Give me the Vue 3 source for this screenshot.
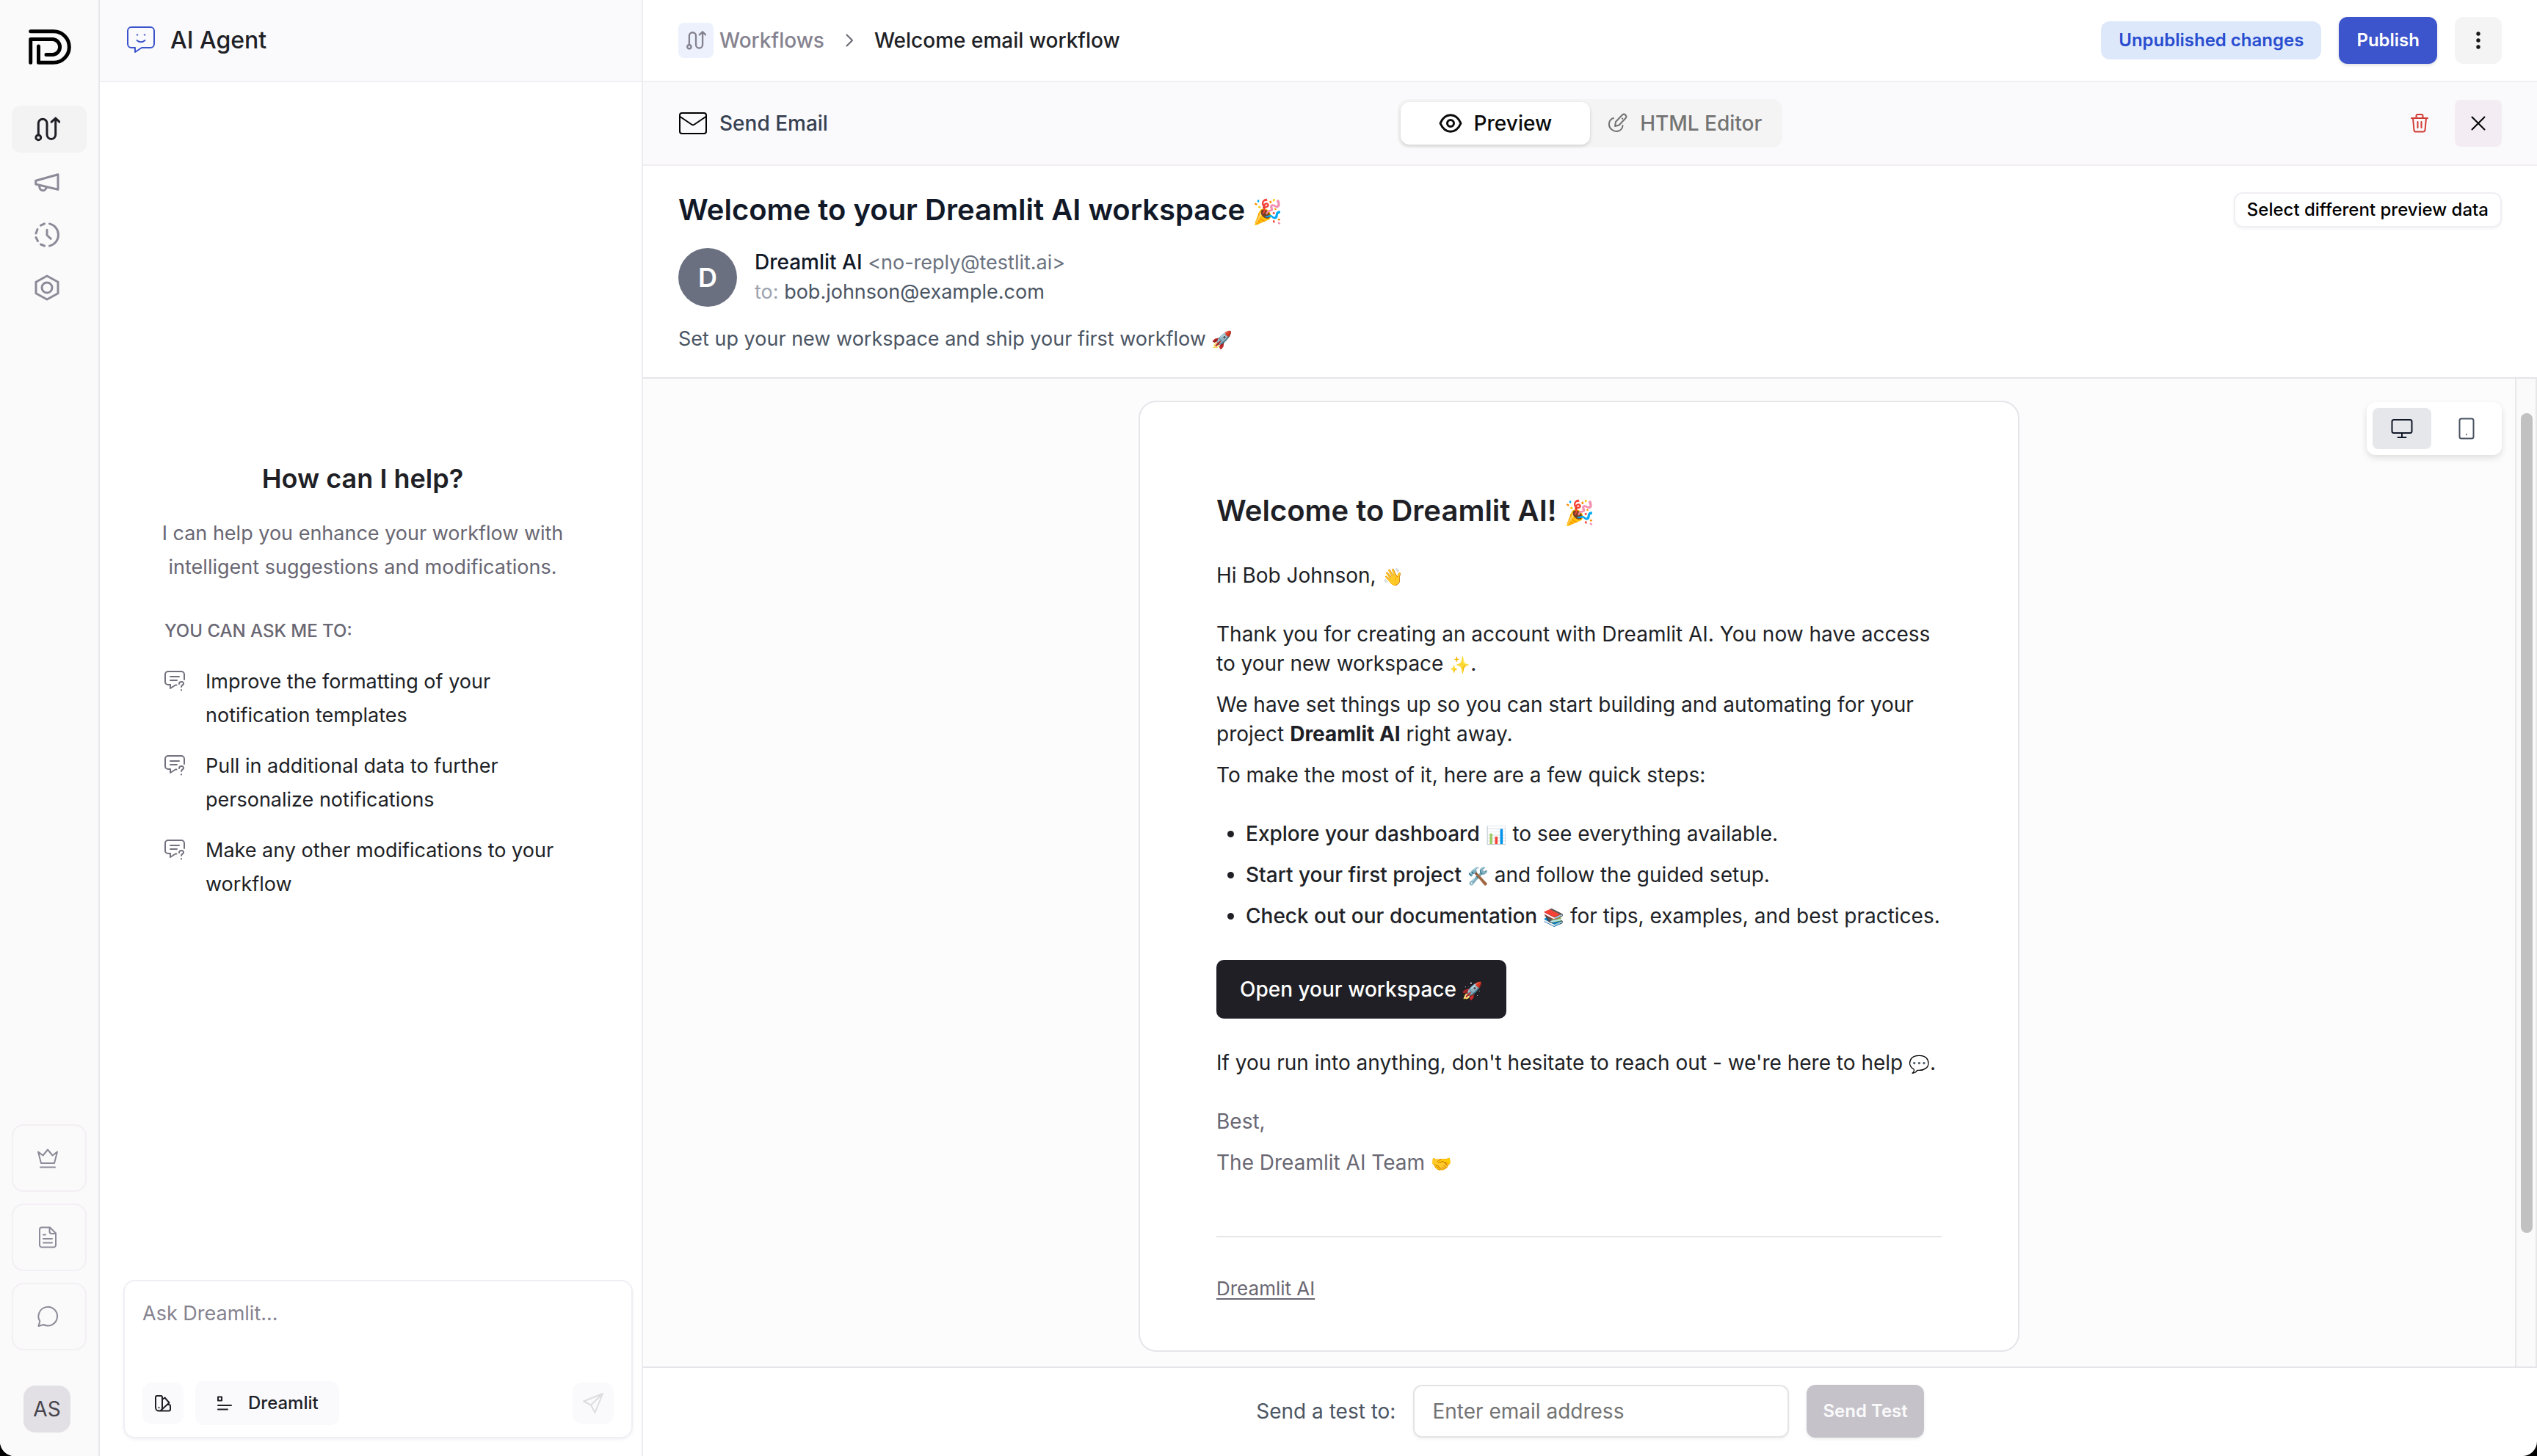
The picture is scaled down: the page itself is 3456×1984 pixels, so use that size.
<script setup>
import { ref } from 'vue'

const email = ref('')
const prompt = ref('')

const suggestions = [
  'Improve the formatting of your notification templates',
  'Pull in additional data to further personalize notifications',
  'Make any other modifications to your workflow',
]

const steps = [
  { title: 'Explore your dashboard', icon: '📊', rest: 'to see everything available.' },
  { title: 'Start your first project', icon: '🛠️', rest: 'and follow the guided setup.' },
  { title: 'Check out our documentation', icon: '📚', rest: 'for tips, examples, and best practices.' },
]
</script>

<template>
  <div class="app">
    <nav class="rail" aria-label="Main">
      <svg class="logo" viewBox="0 0 58 48">
        <path d="M2.7 2.7H34a21.3 21.3 0 0 1 0 42.6H13.5V23" />
        <path d="M2.7 45.3V13.5H33a10.6 10.6 0 0 1 0 21.1H24" />
      </svg>
      <a href="#" class="nav active" aria-label="Workflows">
        <svg class="i36" viewBox="0 0 36 36"><circle cx="6.3" cy="29.4" r="3.4" /><path d="M6.3 26V10a5.85 5.85 0 0 1 11.7 0v15.6a5.85 5.85 0 0 0 11.7 0V3M24.2 8.2 29.7 3l5.3 5.2" /></svg>
      </a>
      <a href="#" class="nav" aria-label="Broadcasts">
        <svg class="i36" viewBox="0 0 36 36"><path d="M2.7 16.3 33 7.7v20.6L2.7 21zM7.6 22.5c0 9 8.5 9 9.7 2.5" /></svg>
      </a>
      <a href="#" class="nav" aria-label="History">
        <svg class="i36" viewBox="0 0 36 36"><path d="M21.5 2.9a15.5 15.5 0 0 1 0 30.2M14.5 2.9l-5 2.3M5 10.5 3 16M3 21.5l2.5 5M9.5 31l5 2M18 11.3v7.2l5.3 4.8" /></svg>
      </a>
      <a href="#" class="nav" aria-label="Settings">
        <svg class="i36" viewBox="0 0 36 36"><path d="m18 2 15 8.2v15.6L18 34 3 25.8V10.2z" /><circle cx="18" cy="18" r="7" /></svg>
      </a>
      <div class="rail-bottom">
        <a href="#" class="tile" aria-label="Upgrade">
          <svg class="i32" viewBox="0 0 32 32"><path d="M3 7.5 7 23h18l4-15.5-6.5 5L16 4.5l-6.500 8zM6 28.5h20" /></svg>
        </a>
        <a href="#" class="tile" aria-label="Documentation">
          <svg class="i32" viewBox="0 0 32 32"><path d="M8 2.5h11l8 8v16a3 3 0 0 1-3 3H8a3 3 0 0 1-3-3v-21a3 3 0 0 1 3-3M18.5 3v5a3 3 0 0 0 3 3H27M10 12.5h3M10 18h12M10 23.5h12" /></svg>
        </a>
        <a href="#" class="tile" aria-label="Feedback">
          <svg class="i32" viewBox="0 0 32 32"><path d="M3.5 29 5.3 22.3A12.8 12.8 0 1 1 10.3 27z" /></svg>
        </a>
        <button class="user" type="button">AS</button>
      </div>
    </nav>

    <aside class="agent">
      <header class="agent-head">
        <svg class="bot" viewBox="0 0 40 40">
          <path d="M7 2h26a5 5 0 0 1 5 5v18a5 5 0 0 1-5 5H21l-9 6v-6H7a5 5 0 0 1-5-5V7a5 5 0 0 1 5-5z" />
          <path d="M14.5 20q5.5 4.5 11 0M14.7 12.5h.6M24.7 12.5h.6" />
        </svg>
        <h2>AI Agent</h2>
      </header>
      <section class="intro">
        <h3>How can I help?</h3>
        <p class="lead">I can help you enhance your workflow with intelligent suggestions and modifications.</p>
        <h4>YOU CAN ASK ME TO:</h4>
        <ul>
          <li v-for="s in suggestions" :key="s">
            <svg class="i28" viewBox="0 0 28 28"><path d="M27 12V5a4 4 0 0 0-4-4H5a4 4 0 0 0-4 4v10a4 4 0 0 0 4 4h3v5l7-4.5h1.5M8 8h12M8 13h9M20 18c0-4.5 7-3.5 6 0-.4 1.5-3 1.5-3 4M23 26v.5" /></svg>
            <span>{{ s }}</span>
          </li>
        </ul>
      </section>
      <form class="chat" @submit.prevent>
        <textarea v-model="prompt" aria-label="Ask Dreamlit" placeholder="Ask Dreamlit..."></textarea>
        <div class="chat-tools">
          <button type="button" class="soft" aria-label="Brand">
            <svg class="i24" viewBox="0 0 24 24"><path d="M2 4a2 2 0 0 1 2-2h5a2 2 0 0 1 2 2v14a4.5 4.5 0 0 1-9 0zM11 7l3.500-2.5 6 7L9.5 21.5M17.5 14H20a2 2 0 0 1 2 2v4.5a2 2 0 0 1-2 2H6.5M6.5 18v.2" /></svg>
          </button>
          <button type="button" class="soft wide">
            <svg class="i24" viewBox="0 0 24 24"><path d="M3 3.5h5v5H3zM3 15h18M3 20.5h13" /></svg>
            <span>Dreamlit</span>
          </button>
          <button type="submit" class="soft send" aria-label="Send">
            <svg class="i32" viewBox="0 0 32 32"><path d="M29 3 3 13.5l10 5L18.5 29zM29 3 13 18.5" /></svg>
          </button>
        </div>
      </form>
    </aside>

    <main class="main">
      <header class="topbar">
        <nav class="crumbs" aria-label="Breadcrumb">
          <a href="#">
            <span class="crumb-icon"><svg class="i28" viewBox="0 0 36 36"><circle cx="6.3" cy="29.4" r="3.4" /><path d="M6.3 26V10a5.85 5.85 0 0 1 11.7 0v15.6a5.85 5.85 0 0 0 11.7 0V3M24.2 8.2 29.7 3l5.3 5.2" /></svg></span>
            Workflows
          </a>
          <svg class="chev" viewBox="0 0 12 18"><path d="m2.500 1.5 7.5 7.5-7.5 7.5" /></svg>
          <span class="current">Welcome email workflow</span>
        </nav>
        <div class="actions">
          <span class="status">Unpublished changes</span>
          <button type="button" class="publish">Publish</button>
          <button type="button" class="square" aria-label="More">
            <svg class="dots" viewBox="0 0 6 24"><circle cx="3" cy="3" r="2.7" /><circle cx="3" cy="12" r="2.7" /><circle cx="3" cy="21" r="2.7" /></svg>
          </button>
        </div>
      </header>

      <div class="toolbar">
        <div class="step">
          <svg class="mail" viewBox="0 0 40 32"><path d="M5 2h30a3 3 0 0 1 3 3v22a3 3 0 0 1-3 3H5a3 3 0 0 1-3-3V5a3 3 0 0 1 3-3zM2.5 7 18 17.5q2 1.5 4 0L37.5 7" /></svg>
          Send Email
        </div>
        <div class="tabs" role="tablist">
          <button type="button" role="tab" aria-selected="true" class="tab on">
            <svg class="i32" viewBox="0 0 32 32"><path d="M2 16C8.500 1 23.5 1 30 16 23.5 31 8.5 31 2 16z" /><circle cx="16" cy="16" r="4.5" /></svg>
            Preview
          </button>
          <button type="button" role="tab" aria-selected="false" class="tab">
            <svg class="i28" viewBox="0 0 28 28"><path d="M8 7C1 9 0 18 5.5 22.5S20 25 20.5 17M10 18l1-6 9-9.500c3-2.5 7 1.5 4.5 4.5l-9 9.5zM20 7.5l.2.2" /></svg>
            HTML Editor
          </button>
        </div>
        <div class="tool-actions">
          <button type="button" class="trash" aria-label="Delete">
            <svg class="i28" viewBox="0 0 28 28"><path d="M3 7h22M9.5 7V4a2 2 0 0 1 2-2h5a2 2 0 0 1 2 2v3M5 7l1.5 16.5a2.5 2.5 0 0 0 2.5 2h10a2.5 2.5 0 0 0 2.5-2L23 7M11.5 12v8M16.5 12v8" /></svg>
          </button>
          <button type="button" class="square close" aria-label="Close">
            <svg class="x" viewBox="0 0 20 20"><path d="m1.5 1.5 17 17M18.5 1.5l-17 17" /></svg>
          </button>
        </div>
      </div>

      <section class="meta">
        <div class="meta-text">
          <h1>Welcome to your Dreamlit AI workspace <span class="emo">🎉</span></h1>
          <div class="from">
            <span class="initial">D</span>
            <div>
              <p><b>Dreamlit AI</b> <span class="addr">&lt;no-reply@testlit.ai&gt;</span></p>
              <p><span class="to">to:</span> bob.johnson@example.com</p>
            </div>
          </div>
          <p class="preheader">Set up your new workspace and ship your first workflow <span class="emo">🚀</span></p>
        </div>
        <button type="button" class="select">Select different preview data</button>
      </section>

      <section class="preview">
        <div class="canvas">
          <article class="mailcard">
            <h2>Welcome to Dreamlit AI! <span class="emo">🎉</span></h2>
            <p class="wide-gap">Hi Bob Johnson, <span class="emo">👋</span></p>
            <p>Thank you for creating an account with Dreamlit AI. You now have access to your new workspace <span class="emo">✨</span>.</p>
            <p>We have set things up so you can start building and automating for your project <strong>Dreamlit AI</strong> right away.</p>
            <p>To make the most of it, here are a few quick steps:</p>
            <ul>
              <li v-for="s in steps" :key="s.title"><b>{{ s.title }}</b> <span class="emo">{{ s.icon }}</span> {{ s.rest }}</li>
            </ul>
            <a href="#" class="cta">Open your workspace <span class="emo">🚀</span></a>
            <p class="wide-gap">If you run into anything, don't hesitate to reach out - we're here to help <span class="emo">💬</span>.</p>
            <p class="muted">Best,</p>
            <p class="muted">The Dreamlit AI Team <span class="emo">🤝</span></p>
            <hr />
            <a href="#" class="foot-link">Dreamlit AI</a>
          </article>
        </div>
        <div class="devices">
          <button type="button" class="on" aria-label="Desktop">
            <svg class="i32" viewBox="0 0 32 32"><path d="M5 4h22a2.5 2.5 0 0 1 2.5 2.5v13A2.5 2.5 0 0 1 27 22H5a2.5 2.5 0 0 1-2.5-2.5v-13A2.5 2.5 0 0 1 5 4zM16 22v5.5M10.5 28h11" /></svg>
          </button>
          <button type="button" aria-label="Mobile">
            <svg class="i32" viewBox="0 0 32 32"><path d="M9 2.5h14A2.5 2.5 0 0 1 25.5 5v22a2.5 2.5 0 0 1-2.5 2.5H9A2.5 2.5 0 0 1 6.5 27V5A2.5 2.5 0 0 1 9 2.5zM16 24.2v.1" /></svg>
          </button>
        </div>
        <div class="scroll"><div class="thumb"></div></div>
      </section>

      <form class="testbar" @submit.prevent>
        <label for="test-email">Send a test to:</label>
        <input id="test-email" v-model="email" type="email" placeholder="Enter email address" />
        <button type="submit">Send Test</button>
      </form>
    </main>
  </div>
</template>

<style>
html, body { margin: 0; background: #000; }
</style>

<style scoped>
* { box-sizing: border-box; }
.app {
  display: flex;
  height: 100vh;
  background: #fff;
  border-radius: 0 0 20px 20px;
  overflow: hidden;
  font-family: Inter, "Liberation Sans", sans-serif;
  font-size: 28px;
  line-height: 40px;
  color: #201f26;
}
h1, h2, h3, h4, p, ul { margin: 0; padding: 0; font-weight: inherit; font-size: inherit; }
ul { list-style: none; }
a { color: inherit; text-decoration: none; }
button { font: inherit; border: 0; padding: 0; background: none; color: inherit; display: flex; align-items: center; justify-content: center; }
svg { display: block; flex: none; fill: none; stroke: currentColor; stroke-width: 2; stroke-linecap: round; stroke-linejoin: round; }
.i24 { width: 24px; height: 24px; }
.i28 { width: 28px; height: 28px; }
.i32 { width: 32px; height: 32px; }
.i36 { width: 36px; height: 36px; stroke-width: 3; }
.emo { font-size: 23px; line-height: 1; }
h1 .emo, h2 .emo { font-size: 33px; }

.rail { width: 136px; flex: none; display: flex; flex-direction: column; gap: 8px; padding: 40px 16px 32px; background: #fafafa; border-right: 2px solid #e8e7ec; }
.logo { width: 58px; height: 48px; margin: 0 0 48px 23px; color: #000; stroke-width: 5; }
.nav { height: 64px; padding-left: 30px; display: flex; align-items: center; border-radius: 12px; color: #8d8a99; }
.nav.active { background: #f3f3f4; color: #201f26; }
.rail-bottom { margin-top: auto; display: flex; flex-direction: column; gap: 16px; }
.tile { height: 92px; padding-right: 4px; display: flex; align-items: center; justify-content: center; border: 2px solid #f3eff4; border-radius: 16px; color: #8d8a99; }
.user { width: 64px; height: 64px; margin: 32px 0 0 16px; border-radius: 16px; background: #e2e0e5; color: #45434c; }

.agent { width: 740px; flex: none; display: flex; flex-direction: column; border-right: 2px solid #ececf1; }
.agent-head { height: 112px; display: flex; align-items: center; gap: 20px; padding-left: 36px; background: #fafafc; border-bottom: 2px solid #f3eef3; font-size: 32px; font-weight: 500; }
.bot { width: 40px; height: 40px; color: #3b54cc; }
.intro { flex: 1; display: flex; flex-direction: column; justify-content: center; padding: 0 102px 0 80px; font-size: 27px; }
.intro h3 { font-size: 36px; font-weight: 600; line-height: 48px; text-align: center; }
.lead { margin: 28px 0 42px; text-align: center; line-height: 46px; color: #696773; }
.intro h4 { font-size: 24px; line-height: 44px; font-weight: 500; color: #696773; padding-left: 8px; }
.intro ul { margin-top: 24px; padding-left: 8px; display: flex; flex-direction: column; gap: 23px; }
.intro li { display: flex; gap: 28px; line-height: 46px; }
.intro li svg { margin-top: 8px; color: #73717e; }
.chat { margin: 0 12px 24px 32px; height: 216px; padding: 24px; display: flex; flex-direction: column; border: 2px solid #f1eef3; border-radius: 16px; box-shadow: 0 2px 4px rgba(0, 0, 0, .05); }
.chat textarea { flex: 1; border: 0; outline: 0; resize: none; padding: 0; background: none; font: inherit; font-size: 27px; color: inherit; }
.chat textarea::placeholder { color: #85828f; opacity: 1; }
.chat-tools { display: flex; align-items: center; gap: 16px; margin-bottom: -8px; }
.soft { width: 56px; height: 56px; border-radius: 12px; background: #fafafc; }
.soft.wide { width: auto; height: 60px; padding: 0 28px; gap: 20px; font-size: 24px; font-weight: 500; }
.soft.send { margin-left: auto; color: #dddce1; }

.main { flex: 1; min-width: 0; display: flex; flex-direction: column; }
.topbar { height: 112px; flex: none; display: flex; align-items: center; justify-content: space-between; padding: 0 48px; border-bottom: 2px solid #f3eef3; font-weight: 500; }
.crumbs { display: flex; align-items: center; gap: 28px; }
.crumbs a { display: flex; align-items: center; gap: 8px; color: #85828f; }
.crumb-icon { width: 48px; height: 48px; display: flex; align-items: center; justify-content: center; border-radius: 8px; background: #edf1fd; }
.crumb-icon svg { stroke-width: 3; }
.chev { width: 12px; height: 18px; color: #696773; }
.actions { display: flex; align-items: center; gap: 24px; font-size: 24px; font-weight: 600; }
.status { height: 52px; padding: 0 24px; display: flex; align-items: center; border-radius: 12px; background: #dde8fb; color: #294dcf; }
.publish { height: 64px; padding: 0 24px; border-radius: 12px; background: #3d55cc; color: #fff; box-shadow: 0 2px 4px rgba(0, 0, 0, .12); }
.square { width: 64px; height: 64px; border-radius: 12px; background: #f4f4f4; }
.dots { width: 6px; height: 24px; fill: #18181b; stroke: none; }
.toolbar { height: 114px; flex: none; display: grid; grid-template-columns: 1fr auto 1fr; align-items: center; padding: 0 48px; background: #fafafc; border-bottom: 2px solid #f3eef3; font-weight: 500; }
.step { display: flex; align-items: center; gap: 16px; color: #374151; }
.mail { width: 40px; height: 32px; color: #000; }
.tabs { display: flex; padding: 4px; border-radius: 14px; background: #f4f4f4; }
.tab { height: 58px; gap: 16px; padding: 0 24px; border-radius: 12px; color: #737373; }
.tab.on { padding: 0 52px; background: #fff; color: #0a0a0a; box-shadow: 0 2px 5px rgba(0, 0, 0, .15); }
.tab.on svg { stroke-width: 3; }
.tool-actions { display: flex; justify-content: flex-end; gap: 16px; }
.trash { width: 64px; color: #d13a32; }
.square.close { background: #f3edf3; border-radius: 8px; color: #000; }
.x { width: 20px; height: 20px; }

.meta { flex: none; display: flex; justify-content: space-between; align-items: flex-start; padding: 32px 48px; border-bottom: 2px solid #e5e5ea; font-size: 27px; color: #4b5563; }
.meta h1 { font-size: 40px; line-height: 56px; font-weight: 600; color: #111827; }
.from { display: flex; align-items: center; gap: 24px; margin: 24px 0; }
.initial { width: 80px; height: 80px; display: flex; align-items: center; justify-content: center; border-radius: 50%; background: #6b7080; color: #fff; font-size: 36px; font-weight: 600; }
.from b { font-size: 28px; line-height: 1; font-weight: 500; color: #111827; }
.addr { color: #6b7280; }
.to { color: #9ca3af; }
.select { height: 48px; margin-top: 4px; padding: 0 16px; border: 2px solid #f1eef3; border-radius: 12px; font-size: 24px; font-weight: 500; color: #000; box-shadow: 0 2px 4px rgba(0, 0, 0, .05); }

.preview { position: relative; flex: 1; min-height: 0; display: flex; background: #fcfcfc; }
.canvas { flex: 1; overflow: hidden; padding-top: 30px; }
.mailcard { width: 1200px; margin: 0 auto; padding: 120px 104px 64px; background: #fff; border: 2px solid #e5e5ea; border-radius: 24px; }
.mailcard h2 { font-size: 40px; line-height: 56px; font-weight: 600; margin-bottom: 40px; }
.mailcard p { margin-bottom: 16px; }
.mailcard .wide-gap { margin-bottom: 40px; }
.mailcard ul { list-style: disc; margin: 40px 0; padding-left: 40px; }
.mailcard li { margin-bottom: 16px; }
.mailcard b { font-weight: 500; }
.mailcard strong { font-weight: 700; }
.cta { display: table; height: 80px; margin-bottom: 40px; padding: 20px 32px; border-radius: 10px; background: #201f26; color: #fff; font-weight: 500; }
.mailcard .muted { color: #696773; }
.mailcard hr { margin: 80px 0 50px; border: 0; border-top: 2px solid #e5e5ea; }
.foot-link { display: table; font-size: 26px; color: #696773; text-decoration: underline; text-underline-offset: 4px; text-decoration-thickness: 2px; }
.devices { position: absolute; top: 32px; right: 48px; display: flex; gap: 8px; padding: 8px; border-radius: 12px; background: #fff; box-shadow: 0 4px 10px rgba(0, 0, 0, .12); }
.devices button { width: 80px; height: 56px; border-radius: 8px; color: #4b5563; }
.devices .on { background: #e5e7eb; color: #111827; }
.scroll { width: 30px; flex: none; padding: 47px 4px 0 6px; background: #fafafa; border: solid #e8e8e8; border-width: 0 2px; }
.thumb { width: 16px; height: 86%; border-radius: 8px; background: #c1c1c1; }

.testbar { flex: none; height: 122px; display: flex; align-items: center; justify-content: center; gap: 24px; border-top: 2px solid #e5e5ea; padding-bottom: 2px; color: #4b5563; }
.testbar input { width: 512px; height: 72px; padding: 0 24px; border: 2px solid #e4e4e4; border-radius: 12px; font: inherit; color: inherit; outline: 0; background: #fff; box-shadow: 0 2px 4px rgba(0, 0, 0, .05); }
.testbar input::placeholder { color: #737373; opacity: 1; }
.testbar button { height: 72px; padding: 0 22px; border-radius: 12px; background: #c5c2ca; color: #fafafa; font-size: 24px; font-weight: 600; box-shadow: 0 2px 4px rgba(0, 0, 0, .08); }
</style>
